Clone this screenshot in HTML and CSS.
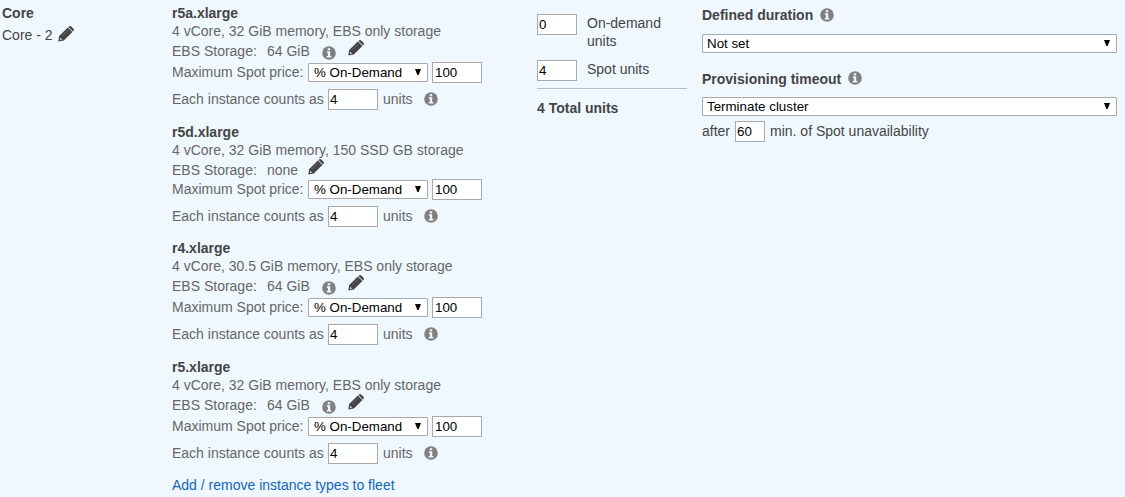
FILE: index.html
```
<!DOCTYPE html>
<html lang="en">
<head>
<meta charset="utf-8">
<title>Instance fleet</title>
<link rel="stylesheet" href="styles.css">
</head>
<body>
<svg class="defs" width="0" height="0">
  <symbol id="pencil" viewBox="0 0 16 16">
    <path fill="#444" d="M1.2 9.9 9.8 1.5 14.4 6.1 5.8 14.6 .3 15.6ZM10.5 .9 11.4 .2Q12.4-.3 13.2.5L15.5 2.8Q16.2 3.6 15.7 4.5L15 5.4Z"/>
    <path stroke="#a5a9ad" stroke-width=".5" d="M10.2 1.3 14.6 5.7"/>
    <path stroke="#888c90" stroke-width=".6" d="M4.4 9.8 9.8 4.4"/>
    <path fill="#d8dee4" d="M2.2 11.7 4.3 13.6 2.6 14 1.9 13.4Z"/>
  </symbol>
  <symbol id="info" viewBox="0 0 14 14">
    <circle cx="7" cy="7" r="6.8" fill="#808080"/>
    <path fill="#f0f8ff" d="M5.8 2.3h2.4v2H5.8zM4.8 5.3h3.4v4.6h1.1v1.5H4.7V9.9h1.2V6.8H4.8z"/>
  </symbol>
</svg>
<main class="fleet">
  <section class="node">
    <h2>Core</h2>
    <div class="name">Core - 2 <svg class="pencil"><use href="#pencil"/></svg></div>
  </section>

  <section class="instances">
    <article class="type">
      <h3>r5a.xlarge</h3>
      <p>4 vCore, 32 GiB memory, EBS only storage</p>
      <div class="ebs"><span class="label">EBS Storage:</span>64 GiB <svg class="info"><use href="#info"/></svg><svg class="pencil"><use href="#pencil"/></svg></div>
      <div class="price"><span class="label">Maximum Spot price:</span><span class="select"><select><option>% On-Demand</option></select></span><input value="100"></div>
      <div class="count"><span class="label">Each instance counts as</span><input value="4"><span class="unit">units</span><svg class="info"><use href="#info"/></svg></div>
    </article>
    <article class="type local">
      <h3>r5d.xlarge</h3>
      <p>4 vCore, 32 GiB memory, 150 SSD GB storage</p>
      <div class="ebs"><span class="label">EBS Storage:</span>none <svg class="pencil"><use href="#pencil"/></svg></div>
      <div class="price"><span class="label">Maximum Spot price:</span><span class="select"><select><option>% On-Demand</option></select></span><input value="100"></div>
      <div class="count"><span class="label">Each instance counts as</span><input value="4"><span class="unit">units</span><svg class="info"><use href="#info"/></svg></div>
    </article>
    <article class="type">
      <h3>r4.xlarge</h3>
      <p>4 vCore, 30.5 GiB memory, EBS only storage</p>
      <div class="ebs"><span class="label">EBS Storage:</span>64 GiB <svg class="info"><use href="#info"/></svg><svg class="pencil"><use href="#pencil"/></svg></div>
      <div class="price"><span class="label">Maximum Spot price:</span><span class="select"><select><option>% On-Demand</option></select></span><input value="100"></div>
      <div class="count"><span class="label">Each instance counts as</span><input value="4"><span class="unit">units</span><svg class="info"><use href="#info"/></svg></div>
    </article>
    <article class="type last">
      <h3>r5.xlarge</h3>
      <p>4 vCore, 32 GiB memory, EBS only storage</p>
      <div class="ebs"><span class="label">EBS Storage:</span>64 GiB <svg class="info"><use href="#info"/></svg><svg class="pencil"><use href="#pencil"/></svg></div>
      <div class="price"><span class="label">Maximum Spot price:</span><span class="select"><select><option>% On-Demand</option></select></span><input value="100"></div>
      <div class="count"><span class="label">Each instance counts as</span><input value="4"><span class="unit">units</span><svg class="info"><use href="#info"/></svg></div>
    </article>
    <a class="add" href="#">Add / remove instance types to fleet</a>
  </section>

  <section class="units">
    <label class="target"><input value="0"><span>On-demand units</span></label>
    <label class="target"><input value="4"><span>Spot units</span></label>
    <div class="total">4 Total units</div>
  </section>

  <section class="options">
    <h3>Defined duration <svg class="info"><use href="#info"/></svg></h3>
    <span class="select"><select><option>Not set</option></select></span>
    <h3 class="timeout">Provisioning timeout <svg class="info"><use href="#info"/></svg></h3>
    <span class="select"><select><option>Terminate cluster</option></select></span>
    <div class="after"><span>after</span><input value="60"><span>min. of Spot unavailability</span></div>
  </section>
</main>
</body>
</html>
```
FILE: styles.css
```
* { box-sizing: border-box; }
body {
  margin: 0;
  background: #f0f8ff;
  color: #444;
  font: 14px/18px "Liberation Sans", Arial, sans-serif;
}
h2, h3, p { margin: 0; font-size: 14px; line-height: 18px; }
.defs { position: absolute; }
.fleet {
  display: grid;
  grid-template-columns: 170px 365px 165px 415px;
  height: 497px;
  padding-left: 2px;
  overflow: hidden;
}
.pencil { width: 16px; height: 16px; flex: none; }
.info { width: 14px; height: 14px; flex: none; }
input {
  height: 21px;
  margin: 0;
  padding: 1px;
  border: 1px solid #a9a9a9;
  border-radius: 0;
  background: #fff;
  color: #000;
  font: 13.333px "Liberation Sans", Arial, sans-serif;
}
.select { display: block; position: relative; }
.select::after {
  content: "";
  position: absolute;
  right: 7px;
  top: 6px;
  width: 6px;
  height: 6px;
  background: #000;
  clip-path: polygon(0 0, 100% 0, 60% 100%, 40% 100%);
}
select {
  display: block;
  appearance: none;
  width: 100%;
  height: 19px;
  margin: 0;
  padding: 0 20px 0 4px;
  border: 1px solid #a9a9a9;
  border-radius: 1px;
  background: #fff;
  color: #000;
  font: 13.333px "Liberation Sans", Arial, sans-serif;
}

.node { padding-top: 4px; }
.name { display: flex; gap: 5px; padding-top: 4px; }

.instances { padding-top: 4px; color: #666; }
.instances h3 { color: #444; }
.type { margin-bottom: 13px; }
.type.local, .type.last { margin-bottom: 12px; }
.ebs { display: flex; height: 22px; line-height: 22px; }
.ebs .label { width: 95px; }
.ebs .info { margin: 6px 0 0 12px; }
.ebs .pencil { margin: 0 0 0 12px; }
.local .ebs { height: 20px; }
.local .ebs .pencil { margin-left: 10px; }
.price, .count { display: flex; align-items: center; height: 21px; }
.price .label, .count .label, .unit, .count .info, .after span { margin-bottom: 2px; }
.price .label { width: 136px; }
.price .select { width: 120px; }
.price select { padding-left: 5px; }
.price input { width: 50px; margin-left: 4px; padding-left: 2px; }
.count { margin-top: 6px; }
.count .label { width: 156px; }
.count input { width: 50px; }
.unit { width: 46px; padding-left: 5px; }
.add { display: block; color: #1166bb; text-decoration: none; }

.units { width: 150px; padding-top: 14px; }
.target { display: flex; gap: 10px; height: 46px; }
.target + .target { height: 28px; }
.target input { width: 40px; }
.target span { width: 90px; }
.total { padding-top: 10px; border-top: 1px solid #bbb; font-weight: bold; }

.options { padding-top: 6px; }
.options h3 { display: flex; gap: 7px; height: 28px; }
.options h3 .info { margin-top: 2px; }
.options .timeout { margin-top: 17px; height: 27px; }
.options .timeout .info { margin-top: 1px; }
.after { display: flex; align-items: center; height: 21px; margin-top: 5px; }
.after input { width: 30px; margin: 0 5px; }
```
